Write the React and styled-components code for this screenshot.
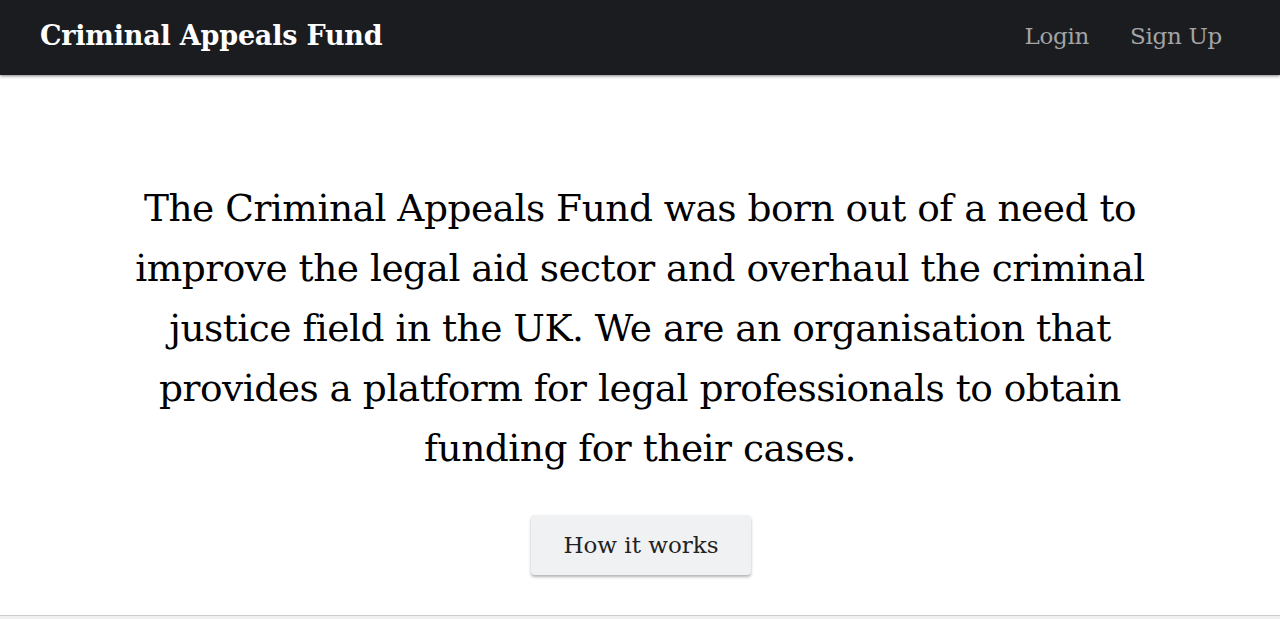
import React from "react";
import styled, { createGlobalStyle } from "styled-components";

const Global = createGlobalStyle`
  html, body { margin: 0; padding: 0; background: #f0f0f0; }
  body { font-family: "DejaVu Serif", "Liberation Serif", serif; }
  * { box-sizing: border-box; }
`;

const Nav = styled.header`
  height: 75px;
  background: #1b1c1f;
  display: flex;
  align-items: center;
  justify-content: space-between;
  padding: 0 58px 4px 40px;
  box-shadow: 0 1px 3px rgba(0,0,0,0.5);
  position: relative;
  z-index: 1;
`;

const Brand = styled.a`
  color: #ffffff;
  font-weight: 700;
  font-size: 27px;
  text-decoration: none;
  letter-spacing: -0.2px;
`;

const Links = styled.nav`
  display: flex;
  gap: 41px;
`;

const NavLink = styled.a`
  color: #a3a4a7;
  font-size: 23px;
  font-weight: 300;
  text-decoration: none;
  letter-spacing: -0.3px;
`;

const Hero = styled.main`
  background: #ffffff;
  height: 541px;
  border-bottom: 1px solid #cccccc;
  display: flex;
  flex-direction: column;
  align-items: center;
  padding-top: 103px;
`;

const Lead = styled.p`
  margin: 0;
  max-width: 1030px;
  text-align: center;
  font-size: 37.5px;
  line-height: 60px;
  color: #000000;
  letter-spacing: -0.5px;
`;

const Button = styled.button`
  margin-top: 37px;
  margin-left: 2px;
  width: 220px;
  height: 60px;
  background: #f0f1f3;
  border: none;
  border-radius: 4px;
  box-shadow: 0 2px 3px rgba(0,0,0,0.3);
  font-family: inherit;
  font-size: 23px;
  color: #222222;
  cursor: pointer;
`;

export default function App() {
  return (
    <>
      <Global />
      <Nav>
        <Brand href="#">Criminal Appeals Fund</Brand>
        <Links>
          <NavLink href="#">Login</NavLink>
          <NavLink href="#">Sign Up</NavLink>
        </Links>
      </Nav>
      <Hero>
        <Lead>
          The Criminal Appeals Fund was born out of a need to improve the legal aid sector and overhaul the criminal justice field in the UK. We are an organisation that provides a platform for legal professionals to obtain funding for their cases.
        </Lead>
        <Button>How it works</Button>
      </Hero>
    </>
  );
}
